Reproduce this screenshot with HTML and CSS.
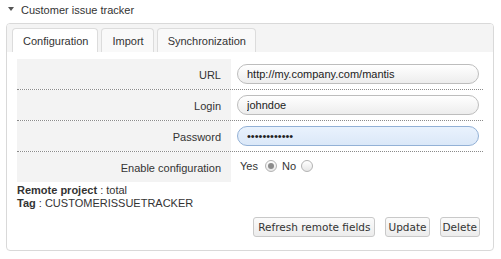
FILE: index.html
```html
<!DOCTYPE html>
<html lang="en">
<head>
    <meta charset="UTF-8">
    <title>Customer issue tracker</title>
    <link rel="stylesheet" href="styles.css">
</head>
<body>
    <!-- section header -->
    <div class="section-title">
        <span class="caret"></span>
        <span>Customer issue tracker</span>
    </div>

    <div class="panel">
        <!-- tabs -->
        <div class="tabs">
            <a class="tab active" href="#">Configuration</a>
            <a class="tab" href="#">Import</a>
            <a class="tab" href="#">Synchronization</a>
        </div>

        <div class="panel-body">
            <div class="form">
                <div class="form-row">
                    <label class="form-label">URL</label>
                    <div class="form-field">
                        <input class="text-input" type="text" value="http://my.company.com/mantis">
                    </div>
                </div>
                <div class="form-row">
                    <label class="form-label">Login</label>
                    <div class="form-field">
                        <input class="text-input" type="text" value="johndoe">
                    </div>
                </div>
                <div class="form-row">
                    <label class="form-label">Password</label>
                    <div class="form-field">
                        <input class="text-input focused" type="password" value="mantispasswd">
                    </div>
                </div>
                <div class="form-row last">
                    <label class="form-label">Enable configuration</label>
                    <div class="form-field radios">
                        <span>Yes</span>
                        <input class="radio" type="radio" name="enable" checked>
                        <span>No</span>
                        <input class="radio" type="radio" name="enable">
                    </div>
                </div>
            </div>

            <div class="info">
                <div><b>Remote project</b> : total</div>
                <div><b>Tag</b> : CUSTOMERISSUETRACKER</div>
            </div>

            <div class="actions">
                <button class="btn">Refresh remote fields</button>
                <button class="btn">Update</button>
                <button class="btn">Delete</button>
            </div>
        </div>
    </div>
</body>
</html>
```

FILE: styles.css
```css
body {
    margin: 0;
    font-family: "Liberation Sans", Arial, sans-serif;
    font-size: 11px;
    color: #333;
    background: #fff;
}
/* section header */
.section-title {
    display: flex;
    align-items: center;
    height: 20px;
    padding: 0 0 3px 8px;
    line-height: 14px;
    color: #333;
}
.caret {
    width: 0;
    height: 0;
    border-left: 3px solid transparent;
    border-right: 3px solid transparent;
    border-top: 4px solid #555;
    margin-right: 7px;
    margin-top: -3px;
}
/* panel */
.panel {
    margin-left: 6px;
    width: 486px;
    border: 1px solid #d9d9d9;
    border-radius: 4px;
    overflow: hidden;
}
.tabs {
    display: flex;
    gap: 3px;
    padding: 4px 5px 0;
    background: #f4f4f4;
}
.tab {
    height: 23px;
    line-height: 24px;
    padding: 0 9px 0 10px;
    border: 1px solid #dcdcdc;
    border-bottom: none;
    border-radius: 4px 4px 0 0;
    background: #f9f9f9;
    color: #333;
    text-decoration: none;
}
.tab.active {
    background: #fff;
}
.panel-body {
    padding: 7px 10px 13px;
}
/* form */
.form-row {
    display: grid;
    grid-template-columns: 214px 1fr;
    height: 30px;
    border-bottom: 1px dotted #8a8a8a;
}
.form-row.last {
    border-bottom: none;
}
.form-label {
    display: flex;
    align-items: center;
    justify-content: flex-end;
    padding-right: 10px;
    padding-top: 1px;
    background: #f3f3f3;
    color: #333;
}
.form-field {
    display: flex;
    align-items: center;
    padding-left: 6px;
}
.text-input {
    box-sizing: border-box;
    width: 242px;
    height: 20px;
    padding: 0 9px;
    border: 1px solid #bdbdbd;
    border-radius: 10px;
    background: linear-gradient(#ffffff, #ededed);
    font-family: "Liberation Sans", Arial, sans-serif;
    font-size: 11px;
    color: #222;
    outline: none;
}
.text-input.focused {
    border-color: #93b1d6;
    background: linear-gradient(#e9f2fd, #dbe8f8);
}
.radios {
    padding-left: 9px;
    gap: 5px;
    align-items: center;
    margin-top: -2px;
}
.radio {
    appearance: none;
    box-sizing: border-box;
    width: 12px;
    height: 12px;
    margin: 0;
    border: 1px solid #b3b3b3;
    border-radius: 50%;
    background: linear-gradient(#ffffff, #e6e6e6);
    position: relative;
}
.radios span:first-child + .radio {
    margin-left: 2px;
}
.radio:checked::after {
    content: "";
    position: absolute;
    left: 2px;
    top: 2px;
    width: 6px;
    height: 6px;
    border-radius: 50%;
    background: #8c8c8c;
}
/* remote info */
.info {
    margin-top: 2px;
    line-height: 13px;
}
.info b {
    font-weight: bold;
}
/* buttons */
.actions {
    display: flex;
    justify-content: flex-end;
    gap: 10px;
    margin-top: 7px;
    padding-right: 3px;
}
.btn {
    height: 20px;
    padding: 0 4px;
    border: 1px solid #c9c9c9;
    border-radius: 3px;
    background: linear-gradient(#fbfbfb, #ececec);
    font-family: "DejaVu Sans", sans-serif;
    font-size: 10.5px;
    color: #333;
}
.btn + .btn {
    padding: 0 2px;
}
```
